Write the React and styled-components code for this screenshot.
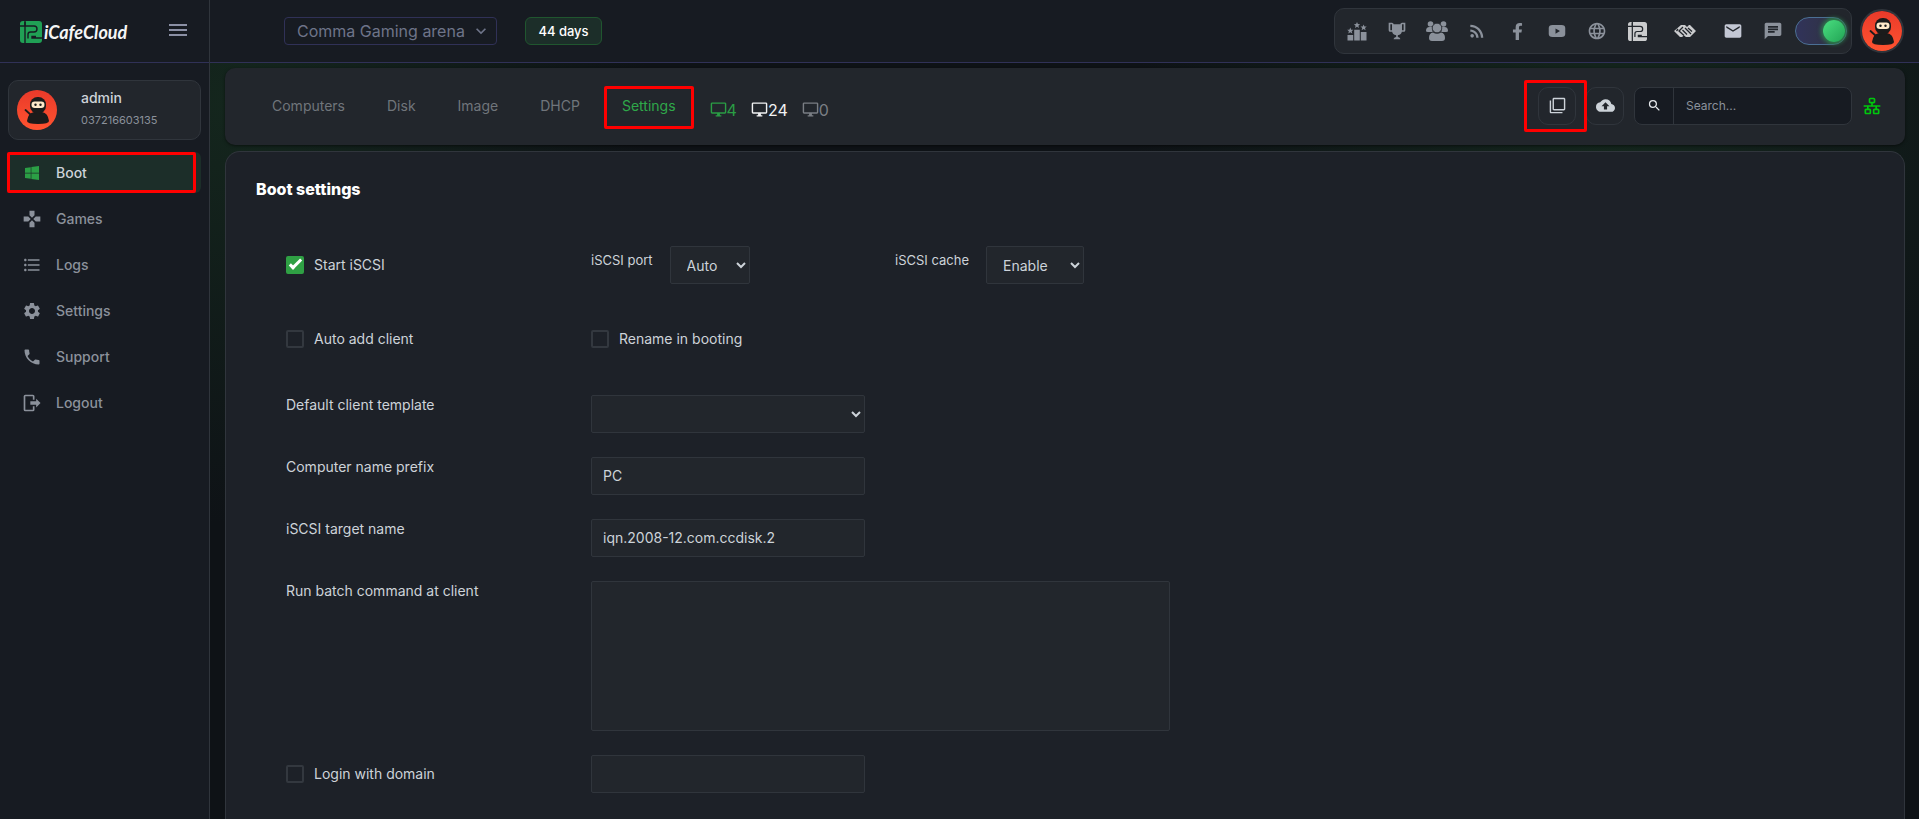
import React from "react";
import styled, { createGlobalStyle, css } from "styled-components";
import {
  MdGamepad, MdFormatListBulleted, MdSettings, MdPhone, MdFilterNone, MdCloudUpload,
  MdSearch, MdRssFeed, MdLanguage, MdEmail, MdChat, MdMenu, MdExpandMore,
} from "react-icons/md";
import { FaWindows, FaFacebookF } from "react-icons/fa";

const c = {
  chrome: "#171b22",
  card: "#22262c",
  panel: "#1d2128",
  line: "#30353c",
  indigo: "#303157",
  muted: "#8b919b",
  text: "#cdd3d9",
  green: "#2b9f45",
  red: "#ff0000",
};

const GlobalStyle = createGlobalStyle`
  *, *::before, *::after { box-sizing: border-box; }
  body {
    margin: 0;
    background: #0e1216;
    color: ${c.text};
    font-family: Inter, "Open Sans", sans-serif;
    font-size: 14px;
  }
  button, input, select, textarea { font-family: inherit; margin: 0; }
  button { cursor: pointer; }
  a { text-decoration: none; color: inherit; }
`;

const Page = styled.div`
  min-height: 100vh;
  display: flex;
`;

const marked = css`
  position: relative;
  &::after {
    content: "";
    position: absolute;
    inset: ${(p) => p.$inset};
    border: 3px solid ${c.red};
    border-radius: 2px;
    pointer-events: none;
    z-index: 2;
  }
`;

/* ---------- Sidebar ---------- */

const Sidebar = styled.aside`
  flex: 0 0 210px;
  background: ${c.chrome};
  border-right: 1px solid ${c.line};
`;

const Brand = styled.div`
  height: 63px;
  padding: 0 19px 3px 20px;
  border-bottom: 1px solid ${c.indigo};
  display: flex;
  align-items: center;
  justify-content: space-between;
`;

const BrandLink = styled.a`
  display: flex;
  align-items: center;
  gap: 2px;
  padding-top: 4px;
  color: #f4f5f6;
  font: italic 700 18px/22px Lato, sans-serif;
`;

const MenuButton = styled.button`
  display: flex;
  padding: 0;
  border: 0;
  background: none;
  color: #8b90a5;
  font-size: 24px;
`;

const Profile = styled.div`
  margin: 17px 8px 12px;
  height: 60px;
  padding: 0 8px;
  display: flex;
  align-items: center;
  gap: 24px;
  background: ${c.card};
  border: 1px solid ${c.line};
  border-radius: 10px;
`;

const ProfileText = styled.div`
  display: flex;
  flex-direction: column;
  gap: 4px;
  padding-bottom: 4px;
`;

const ProfileName = styled.span`
  font-size: 14px;
  line-height: 20px;
  font-weight: 500;
`;

const ProfileId = styled.span`
  font-size: 11px;
  line-height: 16px;
  color: ${c.muted};
`;

const Nav = styled.nav`
  display: flex;
  flex-direction: column;
  gap: 5px;
  padding: 0 8px;
`;

const NavLink = styled.a`
  height: 41px;
  padding-left: 14px;
  display: flex;
  align-items: center;
  gap: 14px;
  border-radius: 6px;
  font-size: 14px;
  font-weight: 500;
  color: ${(p) => (p.$active ? c.text : c.muted)};
  background: ${(p) => (p.$active ? "#1c2e29" : "transparent")};
  ${(p) => p.$active && marked}
  svg {
    width: 20px;
    height: 20px;
    padding: ${(p) => (p.$active ? 2 : 0)}px;
    flex: none;
    color: ${(p) => (p.$active ? c.green : c.muted)};
  }
`;

/* ---------- Header ---------- */

const Body = styled.div`
  flex: 1;
  min-width: 0;
  display: flex;
  flex-direction: column;
`;

const Header = styled.header`
  height: 63px;
  flex: none;
  padding: 0 15px 0 74px;
  display: flex;
  align-items: center;
  background: ${c.chrome};
  border-bottom: 1px solid ${c.indigo};
`;

const StoreButton = styled.button`
  height: 28px;
  width: 213px;
  padding: 0 12px;
  display: flex;
  align-items: center;
  gap: 6px;
  background: none;
  border: 1px solid ${c.indigo};
  border-radius: 4px;
  color: #6e7489;
  font-size: 16px;
  white-space: nowrap;
  svg { width: 20px; height: 20px; flex: none; }
`;

const DaysBadge = styled.span`
  height: 28px;
  width: 77px;
  margin-left: 28px;
  display: flex;
  align-items: center;
  justify-content: center;
  background: #1c2e29;
  border: 1px solid #20562f;
  border-radius: 6px;
  color: #fff;
  font-size: 13px;
  font-weight: 500;
`;

const HeaderTools = styled.div`
  height: 46px;
  margin-left: auto;
  padding: 0 4px 0 2px;
  display: flex;
  align-items: center;
  background: ${c.card};
  border: 1px solid ${c.line};
  border-radius: 10px;
`;

const ToolLink = styled.a`
  width: ${(p) => (p.$wide ? 56 : 40)}px;
  height: 40px;
  display: flex;
  align-items: center;
  justify-content: center;
  color: ${(p) => p.$tone || c.muted};
  svg { width: ${(p) => p.$size || 20}px; height: ${(p) => p.$size || 20}px; }
`;

const ThemeSwitch = styled.input.attrs({ type: "checkbox", role: "switch" })`
  appearance: none;
  width: 52px;
  height: 28px;
  margin-left: 2px;
  border: 1px solid #4b6f94;
  border-radius: 14px;
  background: linear-gradient(90deg, #31335a, #303348 60%, #27543f 70%);
  display: flex;
  align-items: center;
  justify-content: flex-end;
  padding-right: 1px;
  cursor: pointer;
  &::before {
    content: "";
    width: 22px;
    height: 22px;
    border-radius: 50%;
    background: linear-gradient(135deg, #4ade80, #22a455);
    box-shadow: 0 0 4px 2px #2f7d4d;
  }
`;

const AvatarLink = styled.a`
  margin-left: 8px;
  border: 2px solid #30353c;
  border-radius: 50%;
  display: flex;
`;

/* ---------- Toolbar ---------- */

const Main = styled.main`
  flex: 1;
  display: flex;
  flex-direction: column;
  gap: 6px;
  padding: 5px 14px 0 15px;
  background:
    radial-gradient(ellipse 420px 420px at 20px 40px, #14261d, transparent),
    radial-gradient(ellipse 480px 380px at 82% 60px, #14261d, transparent),
    #0e1216;
`;

const Toolbar = styled.section`
  height: 77px;
  padding: 0 23px 2px 29px;
  display: flex;
  align-items: center;
  background: ${c.card};
  border-radius: 10px;
  box-shadow: 0 1px 3px rgba(0, 0, 0, 0.5);
`;

const Tabs = styled.nav`
  display: flex;
  gap: 6px;
`;

const Tab = styled.a`
  padding: 0 18px;
  line-height: 38px;
  color: ${(p) => (p.$active ? "#2fa84a" : "#70757b")};
  ${(p) => p.$active && marked}
`;

const Counts = styled.div`
  display: flex;
  gap: 14px;
  margin-left: 16px;
  padding-top: 8px;
`;

const Count = styled.span`
  display: flex;
  align-items: center;
  font-size: 16px;
  line-height: 20px;
  color: ${(p) => p.$tone};
  svg { width: 17px; height: 17px; }
`;

const Actions = styled.div`
  margin-left: auto;
  display: flex;
  align-items: center;
  gap: 10px;
`;

const IconButton = styled.button`
  width: 38px;
  height: 38px;
  padding: 0;
  display: flex;
  align-items: center;
  justify-content: center;
  background: none;
  border: 1px solid ${c.line};
  border-radius: 10px;
  color: ${c.text};
  font-size: ${(p) => p.$size || 17}px;
  ${(p) => p.$inset && marked}
`;

const Search = styled.form`
  height: 38px;
  width: 218px;
  display: flex;
  background: ${c.chrome};
  border: 1px solid ${c.line};
  border-radius: 8px;
  overflow: hidden;
`;

const SearchButton = styled.button`
  width: 39px;
  flex: none;
  padding: 0;
  display: flex;
  align-items: center;
  justify-content: center;
  border: 0;
  border-right: 1px solid ${c.line};
  background: none;
  color: #e6e9ec;
  font-size: 15px;
`;

const SearchInput = styled.input`
  flex: 1;
  min-width: 0;
  padding: 0 12px;
  border: 0;
  background: none;
  color: ${c.text};
  font-size: 12px;
  &::placeholder { color: #8b919b; }
`;

const LanLink = styled.a`
  display: flex;
  color: #00c80d;
`;

/* ---------- Settings form ---------- */

const Panel = styled.section`
  flex: 1;
  padding: 25px 30px 26px;
  background: ${c.panel};
  border: 1px solid ${c.line};
  border-bottom: 0;
  border-radius: 15px 15px 0 0;
`;

const Title = styled.h1`
  margin: 0 0 44px;
  color: #fff;
  font-size: 16px;
  line-height: 25px;
  font-weight: 800;
`;

const Form = styled.form`
  padding: 0 30px;
  display: flex;
  flex-direction: column;
  gap: 24px;
`;

const Row = styled.div`
  display: grid;
  grid-template-columns: 305px 304px 1fr;
  min-height: 38px;
  align-items: start;
  margin-bottom: ${(p) => p.$after || 0}px;
`;

const Wide = styled.div`
  grid-column: 2 / -1;
`;

const Inline = styled.div`
  display: flex;
  gap: 17px;
  font-size: 13px;
`;

const Label = styled.label`
  padding-top: ${(p) => p.$drop || 0}px;
  line-height: 20px;
`;

const CheckLabel = styled.label`
  display: flex;
  align-items: center;
  gap: 10px;
  line-height: 38px;
`;

const Check = styled.input.attrs({ type: "checkbox" })`
  appearance: none;
  width: 18px;
  height: 18px;
  flex: none;
  display: grid;
  place-items: center;
  border: 2px solid #33383f;
  border-radius: 2px;
  &:checked { background: #2fa044; border-color: #2fa044; }
  &:checked::before {
    content: "";
    width: 13px;
    height: 6px;
    border: solid #fff;
    border-width: 0 0 3px 3px;
    transform: translateY(-2px) rotate(-45deg);
  }
`;

const field = css`
  display: block;
  background-color: ${c.card};
  border: 1px solid ${c.line};
  border-radius: 2px;
  color: ${c.text};
  font-size: 14px;
  outline: 0;
`;

const Select = styled.select`
  ${field}
  width: ${(p) => p.$width}px;
  height: 38px;
  padding: 0 0 0 12px;
`;

const Input = styled.input`
  ${field}
  width: 274px;
  height: 38px;
  padding: 0 11px 2px;
`;

const TextArea = styled.textarea`
  ${field}
  width: 100%;
  max-width: 579px;
  height: 150px;
  padding: 10px 11px;
  resize: none;
`;

/* ---------- Drawings ---------- */

const Glyph = ({ d }) => (
  <svg viewBox="0 0 24 24" width="20" height="20" fill="currentColor" aria-hidden="true"><path d={d} /></svg>
);

const TROPHY = "M18 2C17.1 2 16 3 16 4H8C8 3 6.9 2 6 2H2V11C2 12 3 13 4 13H6.2C6.6 15 7.9 16.7 11 17V19.08C8 19.54 8 22 8 22H16C16 22 16 19.54 13 19.08V17C16.1 16.7 17.4 15 17.8 13H20C21 13 22 12 22 11V2H18M6 11H4V4H6V11M20 11H18V4H20V11Z";
const LOGOUT = "M17,17.25V14H10V10H17V6.75L22.25,12L17,17.25M13,2A2,2 0 0,1 15,4V8H13V4H4V20H13V16H15V20A2,2 0 0,1 13,22H4A2,2 0 0,1 2,20V4A2,2 0 0,1 4,2H13Z";
const LAN = "M10,2C8.89,2 8,2.89 8,4V7C8,8.11 8.89,9 10,9H11V11H2V13H6V15H5C3.89,15 3,15.89 3,17V20C3,21.11 3.89,22 5,22H9C10.11,22 11,21.11 11,20V17C11,15.89 10.11,15 9,15H8V13H16V15H15C13.89,15 13,15.89 13,17V20C13,21.11 13.89,22 15,22H19C20.11,22 21,21.11 21,20V17C21,15.89 20.11,15 19,15H18V13H22V11H13V9H14C15.11,9 16,8.11 16,7V4C16,2.89 15.11,2 14,2H10M10,4H14V7H10V4M5,17H9V20H5V17M15,17H19V20H15V17Z";
const VIDEO = "M6 4H18Q23 4 23 8V16Q23 20 18 20H6Q1 20 1 16V8Q1 4 6 4ZM10 8.5V15.5L16 12Z";
const MONITOR = "M21,16H3V4H21M21,2H3C1.89,2 1,2.89 1,4V16A2,2 0 0,0 3,18H10V20H8V22H16V20H14V18H21A2,2 0 0,0 23,16V4C23,2.89 22.1,2 21,2Z";
const STAR = "M0 -3.200L0.900 -1.100L3.100 -1L1.400 0.500L2 2.700L0 1.500L-2 2.700L-1.400 0.500L-3.100 -1L-0.900 -1.100Z";

const Ranking = () => (
  <svg viewBox="0 0 20 20" aria-hidden="true" fill="currentColor">
    <path d="M0.500 14H6.200V19.500H0.500ZM7.200 8.800H12.800V19.500H7.200ZM13.800 11H19.500V19.500H13.800Z" />
    <path d={STAR} transform="translate(3.300 9.800)" />
    <path d={STAR} transform="translate(10 4.200)" />
    <path d={STAR} transform="translate(16.600 6.600)" />
  </svg>
);

const CafeMark = ({ size = 22, cut, tone }) => (
  <svg viewBox="0 0 22 22" width={size} height={size} aria-hidden="true">
    <rect width="22" height="22" rx="3" fill={tone} />
    <g fill="none" stroke={cut} strokeWidth="1.4">
      <path d="M5 0V22M0 5H14Q17 5 17 8T14 11H10.500Q8 11 8 13.500V17.500M22 17H12V15.500H16" />
      <path d="M5 5V1" />
    </g>
  </svg>
);

const Crowd = () => (
  <svg viewBox="0 0 22 20" aria-hidden="true" fill="currentColor">
    <circle cx="4.500" cy="3" r="2.800" /><circle cx="17.500" cy="3" r="2.800" />
    <path d="M0 10Q0 6 3.500 6H6.500V11H2Q0 11 0 10ZM22 10Q22 6 18.500 6H15.500V11H20Q22 11 22 10Z" />
    <circle cx="11" cy="7" r="4.800" stroke={c.card} strokeWidth="0.8" />
    <path d="M7 11.500Q11 14 15 11.500Q19 12 19 17Q19 20 16 20H6Q3 20 3 17Q3 12 7 11.500Z" />
  </svg>
);

const Links = () => (
  <svg viewBox="0 0 22 12" aria-hidden="true" fill="none">
    <path d="M7 0H11L13 2L15 0H16L22 6L16 12H12L10 10.500L8 12H6L0 6Z" fill="currentColor" />
    <g stroke={c.card} strokeWidth="1.300">
      <path d="M9 2L5 6L10 10.500M8.500 5L13 9.500M11 3L17 9M14 3L18 6.500" />
      <path d="M4 4L2.500 6" />
    </g>
  </svg>
);

const Ninja = () => (
  <svg viewBox="0 0 40 40" width="40" height="40" aria-label="Ninja avatar" role="img">
    <defs>
      <linearGradient id="ember" x1="0" y1="0" x2="0" y2="1">
        <stop offset="0" stopColor="#e93a2a" /><stop offset="1" stopColor="#ff5330" />
      </linearGradient>
    </defs>
    <circle cx="20" cy="20" r="20" fill="url(#ember)" />
    <path d="M8.500 20L14 25" stroke="#1b1b1b" strokeWidth="1.800" strokeLinecap="round" />
    <path d="M10 31Q11 23 17 22H25Q31 23 32 31Q32 34 21 34Q10 34 10 31Z" fill="#1b1b1b" />
    <rect x="13" y="7" width="16" height="16.500" rx="7.500" fill="#1b1b1b" />
    <rect x="14.500" y="11.500" width="13" height="6.500" rx="3.200" fill="#ffe9c9" />
    <circle cx="18.500" cy="14.700" r="1.200" fill="#1b1b1b" /><circle cx="23.500" cy="14.700" r="1.200" fill="#1b1b1b" />
  </svg>
);

/* ---------- Page ---------- */

const navItems = [
  { label: "Boot", icon: <FaWindows />, active: true },
  { label: "Games", icon: <MdGamepad /> },
  { label: "Logs", icon: <MdFormatListBulleted /> },
  { label: "Settings", icon: <MdSettings /> },
  { label: "Support", icon: <MdPhone /> },
  { label: "Logout", icon: <Glyph d={LOGOUT} /> },
];

const tools = [
  { name: "Ranking", icon: <Ranking /> },
  { name: "Tournaments", icon: <Glyph d={TROPHY} /> },
  { name: "Community", icon: <Crowd />, size: 22 },
  { name: "News feed", icon: <MdRssFeed /> },
  { name: "Facebook", icon: <FaFacebookF />, size: 17 },
  { name: "Videos", icon: <Glyph d={VIDEO} />, size: 18 },
  { name: "Website", icon: <MdLanguage /> },
  { name: "iCafeCloud", icon: <CafeMark tone="#cbccce" cut={c.card} />, size: 19, tone: "#cbccce" },
  { name: "Partners", icon: <Links />, size: 22, tone: "#cbccce", wide: true },
  { name: "Mail", icon: <MdEmail />, tone: "#c3c7d4" },
  { name: "Messages", icon: <MdChat /> },
];

const tabs = ["Computers", "Disk", "Image", "DHCP", "Settings"];

export default function App() {
  return (
    <>
      <GlobalStyle />
      <Page>
        <Sidebar>
          <Brand>
            <BrandLink href="#home">
              <CafeMark tone="#20a055" cut={c.chrome} />
              <span>iCafeCloud</span>
            </BrandLink>
            <MenuButton type="button" aria-label="Toggle menu"><MdMenu /></MenuButton>
          </Brand>
          <Profile>
            <Ninja />
            <ProfileText>
              <ProfileName>admin</ProfileName>
              <ProfileId>037216603135</ProfileId>
            </ProfileText>
          </Profile>
          <Nav>
            {navItems.map((n) => (
              <NavLink key={n.label} href={"#" + n.label.toLowerCase()} $active={n.active} $inset="0 5px 0 -1px">
                {n.icon}
                {n.label}
              </NavLink>
            ))}
          </Nav>
        </Sidebar>
        <Body>
          <Header>
            <StoreButton type="button">Comma Gaming arena<MdExpandMore /></StoreButton>
            <DaysBadge>44 days</DaysBadge>
            <HeaderTools>
              {tools.map((t) => (
                <ToolLink key={t.name} href="#" aria-label={t.name} $size={t.size} $tone={t.tone} $wide={t.wide}>
                  {t.icon}
                </ToolLink>
              ))}
              <ThemeSwitch aria-label="Dark theme" defaultChecked />
            </HeaderTools>
            <AvatarLink href="#account" aria-label="Account"><Ninja /></AvatarLink>
          </Header>
          <Main>
            <Toolbar>
              <Tabs>
                {tabs.map((t) => (
                  <Tab key={t} href={"#" + t.toLowerCase()} $active={t === "Settings"} $inset="-1px 0 -4px 0">{t}</Tab>
                ))}
              </Tabs>
              <Counts>
                <Count $tone="#2a9d44"><Glyph d={MONITOR} />4</Count>
                <Count $tone="#f1f2f3"><Glyph d={MONITOR} />24</Count>
                <Count $tone="#7a7e84"><Glyph d={MONITOR} />0</Count>
              </Counts>
              <Actions>
                <IconButton type="button" aria-label="Copy" $inset="-8px -12px -8px -15px"><MdFilterNone /></IconButton>
                <IconButton type="button" aria-label="Upload" $size={19}><MdCloudUpload /></IconButton>
                <Search>
                  <SearchButton type="button" aria-label="Search"><MdSearch /></SearchButton>
                  <SearchInput type="search" aria-label="Search" placeholder="Search..." />
                </Search>
                <LanLink href="#network" aria-label="Network"><Glyph d={LAN} /></LanLink>
              </Actions>
            </Toolbar>
            <Panel>
              <Title>Boot settings</Title>
              <Form>
                <Row $after={12}>
                  <CheckLabel><Check defaultChecked />Start iSCSI</CheckLabel>
                  <Inline>
                    <Label htmlFor="port" $drop={4}>iSCSI port</Label>
                    <Select id="port" $width={80}><option>Auto</option></Select>
                  </Inline>
                  <Inline>
                    <Label htmlFor="cache" $drop={4}>iSCSI cache</Label>
                    <Select id="cache" $width={98}><option>Enable</option></Select>
                  </Inline>
                </Row>
                <Row $after={13}>
                  <CheckLabel><Check />Auto add client</CheckLabel>
                  <CheckLabel><Check />Rename in booting</CheckLabel>
                </Row>
                <Row>
                  <Label htmlFor="template">Default client template</Label>
                  <Wide><Select id="template" $width={274}><option></option></Select></Wide>
                </Row>
                <Row>
                  <Label htmlFor="prefix">Computer name prefix</Label>
                  <Wide><Input id="prefix" defaultValue="PC" /></Wide>
                </Row>
                <Row>
                  <Label htmlFor="target">iSCSI target name</Label>
                  <Wide><Input id="target" defaultValue="iqn.2008-12.com.ccdisk.2" /></Wide>
                </Row>
                <Row>
                  <Label htmlFor="batch">Run batch command at client</Label>
                  <Wide><TextArea id="batch" /></Wide>
                </Row>
                <Row>
                  <CheckLabel><Check />Login with domain</CheckLabel>
                  <Wide><Input aria-label="Domain" /></Wide>
                </Row>
              </Form>
            </Panel>
          </Main>
        </Body>
      </Page>
    </>
  );
}
